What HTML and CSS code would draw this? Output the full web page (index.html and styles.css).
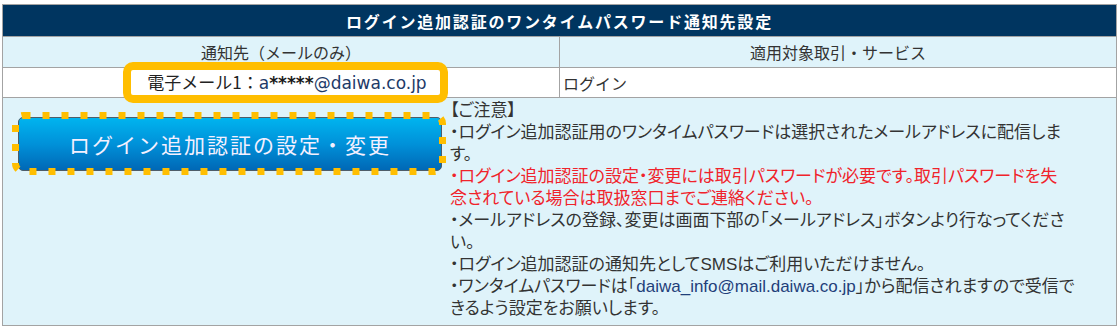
FILE: index.html
```html
<!DOCTYPE html>
<html lang="ja">
<head>
<meta charset="utf-8">
<title>ログイン追加認証のワンタイムパスワード通知先設定</title>
<link rel="stylesheet" href="styles.css">
</head>
<body>
<table class="otp">
  <colgroup><col class="c1"><col class="c2"></colgroup>
  <tr class="title-row">
    <th colspan="2" class="title">ログイン追加認証のワンタイムパスワード通知先設定</th>
  </tr>
  <tr class="head">
    <td>通知先（メールのみ）</td>
    <td>適用対象取引・サービス</td>
  </tr>
  <tr class="data">
    <td class="addr"><span class="mail"><span class="lbl">電子メール1：</span><span class="em">a<b class="mask">*****</b>@daiwa.co.jp</span></span></td>
    <td class="svc">ログイン</td>
  </tr>
  <tr class="notes-row">
    <td colspan="2" class="notes-cell">
      <div class="notes-wrap">
        <div class="btn-area">
          <div class="btn-frame">
            <a class="btn" href="#">ログイン追加認証の設定・変更</a>
            <svg class="frame" width="434" height="63" viewBox="0 0 434 63" aria-hidden="true">
              <rect x="3.5" y="3.5" width="427" height="56" rx="8" ry="8" fill="none" stroke="#ffbe00" stroke-width="7" stroke-dasharray="7 12"/>
            </svg>
          </div>
        </div>
        <div class="notes">
          <p>【ご注意】</p>
          <p>・ログイン追加認証用のワンタイムパスワードは選択されたメールアドレスに配信しま<br>す。</p>
          <p class="red">・ログイン追加認証の設定・変更には取引パスワードが必要です。取引パスワードを失<br>念されている場合は取扱窓口までご連絡ください。</p>
          <p>・メールアドレスの登録、変更は画面下部の「メールアドレス」ボタンより行なってくださ<br>い。</p>
          <p>・ログイン追加認証の通知先としてSMSはご利用いただけません。</p>
          <p>・ワンタイムパスワードは「<span class="link">daiwa_info@mail.daiwa.co.jp</span>」から配信されますので受信で<br>きるよう設定をお願いします。</p>
        </div>
      </div>
    </td>
  </tr>
</table>
</body>
</html>
```

FILE: styles.css
```css
body {
  margin: 0;
  background: #ffffff;
  font-family: "Noto Sans CJK JP", sans-serif;
  color: #333333;
}

.otp {
  border-collapse: collapse;
  table-layout: fixed;
  width: 1115px;
  margin: 4px 0 0 2px;
  border: 1px solid #8e9aa3;
}

.c1 { width: 557px; }

.otp th,
.otp td {
  border: 1px solid #a3a3a3;
  padding: 0;
}

.title {
  height: 31px;
  background: #003560;
  color: #ffffff;
  font-size: 16px;
  font-weight: bold;
  letter-spacing: 1.8px;
  line-height: 20px;
  text-align: center;
}

.head td {
  height: 30px;
  background: #dff3fa;
  font-size: 16px;
  line-height: 20px;
  text-align: center;
}

.data td {
  height: 29px;
  background: #ffffff;
  font-size: 16px;
  line-height: 20px;
}

.otp .addr {
  text-align: center;
  padding-left: 12px;
}

.mail {
  position: relative;
  display: inline-block;
  font-size: 17px;
  line-height: 24px;
  vertical-align: middle;
}

.mail::before {
  content: "";
  position: absolute;
  left: -24px;
  right: -21px;
  top: -8px;
  bottom: -8px;
  border: 8px solid #ffbe00;
  border-radius: 10px;
}

.lbl { color: #222222; }

.em {
  color: #1d3a68;
  font-family: "DejaVu Sans", "Noto Sans CJK JP", sans-serif;
  font-size: 17px;
}

.mask {
  color: #1a1a1a;
  font-weight: bold;
}

.otp .svc { padding-left: 3px; }

.notes-cell {
  background: #dff3fa;
  vertical-align: top;
}

.notes-wrap { display: flex; }

.btn-area {
  flex: none;
  width: 445px;
  padding: 19px 0 0 15px;
  box-sizing: border-box;
}

.btn-frame {
  position: relative;
  width: 424px;
  height: 54px;
}

.btn {
  display: flex;
  align-items: center;
  justify-content: center;
  height: 100%;
  box-sizing: border-box;
  border: 1px solid #4f5d68;
  border-radius: 5px;
  background: linear-gradient(#00b4ef, #0091d9 50%, #0068b6);
  color: #f4f0ff;
  font-size: 21px;
  letter-spacing: 2px;
  text-decoration: none;
}

.frame {
  position: absolute;
  left: -6px;
  top: -5px;
}

.notes {
  flex: 1;
  padding: 2px 4px 5px 2px;
  font-family: "Liberation Sans", "Noto Sans CJK JP", sans-serif;
  font-size: 17px;
  line-height: 22px;
  font-feature-settings: "palt";
}

.notes p { margin: 0; }

.red { color: #f0232b; }

.link { color: #1f3f7a; }
```
